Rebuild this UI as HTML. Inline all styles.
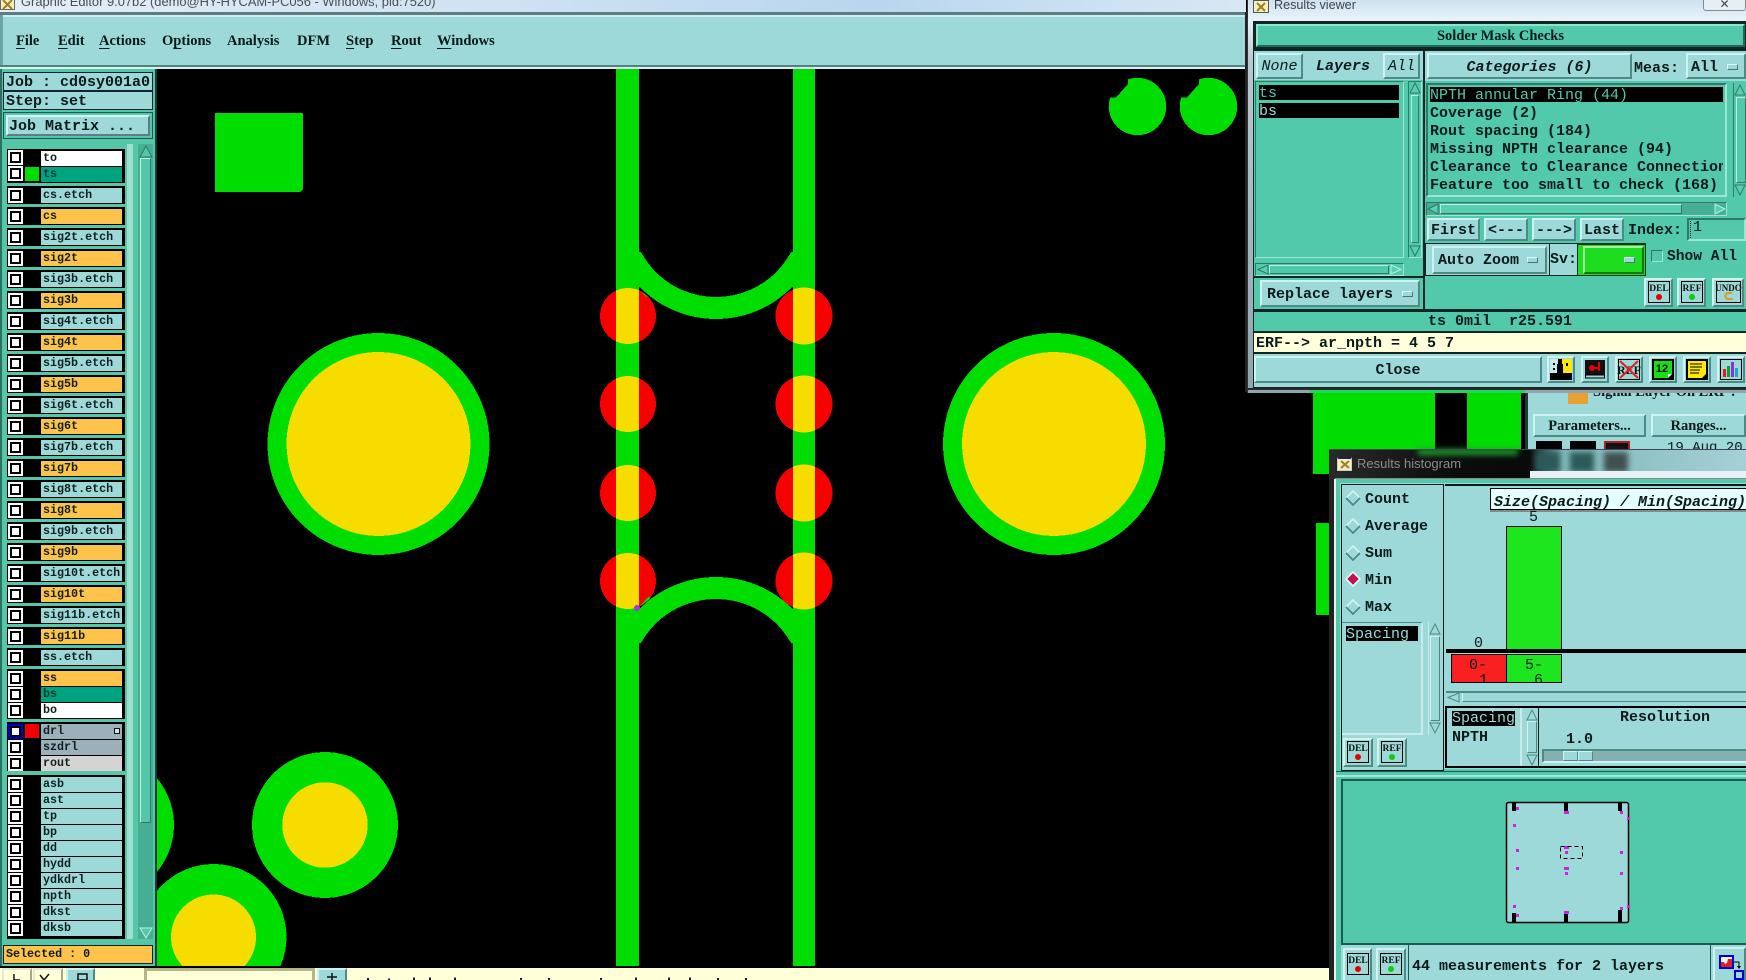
<!DOCTYPE html>
<html><head><meta charset="utf-8"><title>Graphic Editor</title>
<style>
html,body{margin:0;padding:0;background:#000;width:1746px;height:980px;overflow:hidden}
#p{position:relative;width:1746px;height:980px;overflow:hidden;background:#000;font:bold 15px/16px "Liberation Mono",monospace;color:#0c1a18}
#p div,#p span,#p svg.a,#p i,#p b{position:absolute;white-space:pre}
#p i,#p b{font-style:normal}
.b{box-sizing:border-box;background:#9dd9d9;border:2px solid;border-color:#cdf3f3 #4c8a86 #4c8a86 #cdf3f3}
.g{box-sizing:border-box;background:#52c9ab}
.c{left:8px;width:15px;height:15px;box-sizing:border-box;background:#fff;border:2px solid #fff}
.c:after{content:"";position:absolute;left:0;top:0;width:7px;height:7px;border:2px solid #000;background:#fff}
.l{left:41px;width:81px;height:14.5px;padding-left:2px;box-sizing:border-box;background:#9dd9d9;font:bold 11.7px/14px "Liberation Mono",monospace;color:#10201e}
.o{background:#fec34a}.w{background:#fff}.t{background:#00a37f;color:#02362c}.y{background:#9bb0b8}
.k{left:7px;width:117.5px;background:#000}
.s{font:bold 14.5px/16px "Liberation Serif",serif}
.m{font:bold 14.5px/16px "Liberation Serif",serif;top:33px;color:#0a1a1a}
.m u{text-underline-offset:3px}
.it{font-style:italic}
.dd{width:11px;height:6px;box-sizing:border-box;background:#9dd9d9;border:1px solid;border-color:#dff #477 #477 #dff}
.ic{box-sizing:border-box;background:#9dd9d9;border:2px solid;border-color:#cdf3f3 #4c8a86 #4c8a86 #cdf3f3}
.ic svg{position:absolute;left:0;top:0}
</style></head><body><div id="p">

<svg class="a" style="left:0;top:0" width="1746" height="980" shape-rendering="crispEdges">
<defs>
<clipPath id="cv"><rect x="157" y="69" width="1368" height="897"/></clipPath>
<clipPath id="t1"><rect x="617" y="252" width="197" height="90"/></clipPath>
<clipPath id="t2"><rect x="617" y="560" width="197" height="83"/></clipPath>
<clipPath id="tr"><rect x="616" y="0" width="23" height="980"/><rect x="793" y="0" width="22" height="980"/></clipPath>
</defs>
<g clip-path="url(#cv)">
<rect x="215" y="113" width="88" height="79" fill="#00dd00"/><path d="M303 192h-3l3-3z" fill="#000"/>
<rect x="616" y="69" width="23" height="897" fill="#00dd00"/>
<rect x="793" y="69" width="22" height="897" fill="#00dd00"/>
<circle cx="716" cy="212" r="96" fill="none" stroke="#00dd00" stroke-width="22" clip-path="url(#t1)"/>
<circle cx="716" cy="685" r="97" fill="none" stroke="#00dd00" stroke-width="22" clip-path="url(#t2)"/>
<g fill="#f80000"><circle cx="628" cy="316" r="28"/><circle cx="628" cy="404" r="28"/><circle cx="628" cy="493" r="28"/><circle cx="628" cy="581" r="28"/><circle cx="804" cy="316" r="28.5"/><circle cx="804" cy="404" r="28.5"/><circle cx="804" cy="493" r="28.5"/><circle cx="804" cy="581" r="28.5"/></g>
<g fill="#f7dc00" clip-path="url(#tr)"><circle cx="628" cy="316" r="28"/><circle cx="628" cy="404" r="28"/><circle cx="628" cy="493" r="28"/><circle cx="628" cy="581" r="28"/><circle cx="804" cy="316" r="28.5"/><circle cx="804" cy="404" r="28.5"/><circle cx="804" cy="493" r="28.5"/><circle cx="804" cy="581" r="28.5"/></g>
<path d="M639 290l8 6-1 1z" fill="#00dd00"/>
<path d="M640 606l9-10 1 3z" fill="#00dd00"/>
<circle cx="637" cy="608" r="3" fill="#b030e0"/>
<circle cx="378.500" cy="444" r="111" fill="#00dd00"/><circle cx="378.500" cy="444" r="92" fill="#f7dc00"/>
<circle cx="1054" cy="444" r="111" fill="#00dd00"/><circle cx="1054" cy="444" r="92" fill="#f7dc00"/>
<circle cx="325" cy="825" r="73" fill="#00dd00"/><circle cx="325" cy="825" r="42.700" fill="#f7dc00"/>
<circle cx="101" cy="825" r="73" fill="#00dd00"/>
<circle cx="213.500" cy="937" r="73" fill="#00dd00"/><circle cx="213.500" cy="937" r="42.500" fill="#f7dc00"/>
<circle cx="1137.500" cy="106.500" r="28.700" fill="#00dd00"/><circle cx="1208.500" cy="106.500" r="28.700" fill="#00dd00"/>
<path d="M1105 97l11 .5 12-13.500V75h-23z" fill="#000"/><path d="M1176 97l11 .5 12-13.500V75h-23z" fill="#000"/>
<rect x="1313" y="392" width="122" height="82" fill="#00dd00"/>
<rect x="1467" y="392" width="54" height="57" fill="#00dd00"/>
<rect x="1316" y="523" width="13" height="92" fill="#00dd00"/>
</g>
</svg>

<!-- title bar -->
<div style="left:0;top:0;width:1246px;height:12px;background:linear-gradient(90deg,#e4eef6,#cfe2f2 40%,#b9d6ee 70%,#d8e8f4)"></div>
<div style="left:0;top:12px;width:1246px;height:3px;background:#5d7d82"></div>
<div style="left:0;top:-6px;width:15px;height:16px;background:#f4f0c0;border:1px solid #666;box-sizing:border-box"></div>
<svg class="a" style="left:1px;top:0" width="14" height="10"><path d="M2 0l9 9M11 0L2 9" stroke="#a08020" stroke-width="2"/></svg>
<div style="left:21px;top:-6px;font:12.900px/16px 'Liberation Sans',sans-serif;color:#4a4f52">Graphic Editor 9.07b2 (demo@HY-HYCAM-PC056 - Windows, pid:7520)</div>

<!-- menu bar -->
<div style="left:0;top:15px;width:1245px;height:2px;background:#c9efef"></div>
<div style="left:0;top:17px;width:1245px;height:48px;background:#9dd9d9"></div>
<div style="left:0;top:15px;width:3px;height:50px;background:#6aa5a5"></div>
<div style="left:0;top:65px;width:1245px;height:2px;background:#54807f"></div>
<div style="left:0;top:67px;width:1245px;height:2px;background:#d8f2f2"></div>
<div class="m" style="left:16px"><u>F</u>ile</div>
<div class="m" style="left:58px"><u>E</u>dit</div>
<div class="m" style="left:99px"><u>A</u>ctions</div>
<div class="m" style="left:162px">O<u>p</u>tions</div>
<div class="m" style="left:227px">Analysis</div>
<div class="m" style="left:297px">DFM</div>
<div class="m" style="left:346px"><u>S</u>tep</div>
<div class="m" style="left:391px"><u>R</u>out</div>
<div class="m" style="left:437px"><u>W</u>indows</div>

<!-- left panel -->
<div class="g" style="left:0;top:69px;width:155px;height:897px;background:#55c6a8"></div>
<div style="left:0;top:69px;width:2px;height:897px;background:#2d6f60"></div>
<div style="left:155px;top:69px;width:2px;height:897px;background:#1a3c36"></div>
<div style="left:3px;top:72px;width:150px;height:19px;background:#9dd9d9;border:1px solid #123;box-sizing:border-box;padding:2px 0 0 2px">Job : cd0sy001a0</div>
<div style="left:3px;top:91px;width:150px;height:19px;background:#9dd9d9;border:1px solid #123;box-sizing:border-box;padding:2px 0 0 2px">Step: set</div>
<div style="left:3px;top:112px;width:150px;height:27px;background:#52c9ab;border:1px solid #1c5a50;box-sizing:border-box"></div>
<div class="b" style="left:6px;top:115px;width:144px;height:21px;padding:2px 0 0 1px;border-color:#d8f4f4 #678 #678 #d8f4f4">Job Matrix ...</div>

<div style="left:127px;top:144px;width:6px;height:795px;background:#9ddfd0"></div>
<div style="left:138px;top:144px;width:15px;height:795px;background:#45ae93"></div>
<div style="left:140px;top:158px;width:11px;height:665px;background:#55c6a8;border:1px solid;border-color:#bff0e0 #2d7a68 #2d7a68 #bff0e0;box-sizing:border-box"></div>
<svg class="a" style="left:139px;top:145px" width="14" height="13"><path d="M7 1l6 11H1z" fill="#55c6a8" stroke="#2d7a68"/></svg>
<svg class="a" style="left:139px;top:927px" width="14" height="12"><path d="M7 11L13 1H1z" fill="#55c6a8" stroke="#bff0e0"/></svg>

<div class="k" style="top:149px;height:34px"></div>
<div class="k" style="top:186px;height:18px"></div><div class="k" style="top:207px;height:18px"></div><div class="k" style="top:228px;height:18px"></div><div class="k" style="top:249px;height:18px"></div><div class="k" style="top:270px;height:18px"></div><div class="k" style="top:291px;height:18px"></div><div class="k" style="top:312px;height:18px"></div><div class="k" style="top:333px;height:18px"></div><div class="k" style="top:354px;height:18px"></div><div class="k" style="top:375px;height:18px"></div><div class="k" style="top:396px;height:18px"></div><div class="k" style="top:417px;height:18px"></div><div class="k" style="top:438px;height:18px"></div><div class="k" style="top:459px;height:18px"></div><div class="k" style="top:480px;height:18px"></div><div class="k" style="top:501px;height:18px"></div><div class="k" style="top:522px;height:18px"></div><div class="k" style="top:543px;height:18px"></div><div class="k" style="top:564px;height:18px"></div><div class="k" style="top:585px;height:18px"></div><div class="k" style="top:606px;height:18px"></div><div class="k" style="top:627px;height:18px"></div><div class="k" style="top:648px;height:18px"></div>
<div class="k" style="top:669px;height:50px"></div>
<div class="k" style="top:722px;height:49px"></div>
<div class="k" style="top:775px;height:164px"></div>

<i class="c" style="top:150px"></i><b class="l w" style="top:151px">to</b>
<i class="c" style="top:166px"></i><b style="left:25px;top:167px;width:14px;height:14px;background:#00dd00"></b><b class="l t" style="top:167px">ts</b>
<i class="c" style="top:188px"></i><b class="l" style="top:188px">cs.etch</b>
<i class="c" style="top:209px"></i><b class="l o" style="top:209px">cs</b>
<i class="c" style="top:230px"></i><b class="l" style="top:230px">sig2t.etch</b>
<i class="c" style="top:251px"></i><b class="l o" style="top:251px">sig2t</b>
<i class="c" style="top:272px"></i><b class="l" style="top:272px">sig3b.etch</b>
<i class="c" style="top:293px"></i><b class="l o" style="top:293px">sig3b</b>
<i class="c" style="top:314px"></i><b class="l" style="top:314px">sig4t.etch</b>
<i class="c" style="top:335px"></i><b class="l o" style="top:335px">sig4t</b>
<i class="c" style="top:356px"></i><b class="l" style="top:356px">sig5b.etch</b>
<i class="c" style="top:377px"></i><b class="l o" style="top:377px">sig5b</b>
<i class="c" style="top:398px"></i><b class="l" style="top:398px">sig6t.etch</b>
<i class="c" style="top:419px"></i><b class="l o" style="top:419px">sig6t</b>
<i class="c" style="top:440px"></i><b class="l" style="top:440px">sig7b.etch</b>
<i class="c" style="top:461px"></i><b class="l o" style="top:461px">sig7b</b>
<i class="c" style="top:482px"></i><b class="l" style="top:482px">sig8t.etch</b>
<i class="c" style="top:503px"></i><b class="l o" style="top:503px">sig8t</b>
<i class="c" style="top:524px"></i><b class="l" style="top:524px">sig9b.etch</b>
<i class="c" style="top:545px"></i><b class="l o" style="top:545px">sig9b</b>
<i class="c" style="top:566px"></i><b class="l" style="top:566px">sig10t.etch</b>
<i class="c" style="top:587px"></i><b class="l o" style="top:587px">sig10t</b>
<i class="c" style="top:608px"></i><b class="l" style="top:608px">sig11b.etch</b>
<i class="c" style="top:629px"></i><b class="l o" style="top:629px">sig11b</b>
<i class="c" style="top:650px"></i><b class="l" style="top:650px">ss.etch</b>
<i class="c" style="top:671px"></i><b class="l o" style="top:671px">ss</b>
<i class="c" style="top:687px"></i><b class="l t" style="top:687px">bs</b>
<i class="c" style="top:703px"></i><b class="l w" style="top:703px">bo</b>
<i class="c" style="top:724px;border-color:#0000c8;background:#0000c8"></i><b style="left:25px;top:724px;width:14px;height:14px;background:#f00000"></b><b class="l y" style="top:724px">drl</b>
<b style="left:114px;top:728px;width:6px;height:6px;border:1px solid #111;background:#d8e4e4;box-sizing:border-box"></b>
<i class="c" style="top:740px"></i><b class="l y" style="top:740px">szdrl</b>
<i class="c" style="top:756px"></i><b class="l" style="top:756px;background:#d4d4d4">rout</b>
<i class="c" style="top:777px"></i><b class="l" style="top:777px">asb</b>
<i class="c" style="top:793px"></i><b class="l" style="top:793px">ast</b>
<i class="c" style="top:809px"></i><b class="l" style="top:809px">tp</b>
<i class="c" style="top:825px"></i><b class="l" style="top:825px">bp</b>
<i class="c" style="top:841px"></i><b class="l" style="top:841px">dd</b>
<i class="c" style="top:857px"></i><b class="l" style="top:857px">hydd</b>
<i class="c" style="top:873px"></i><b class="l" style="top:873px">ydkdrl</b>
<i class="c" style="top:889px"></i><b class="l" style="top:889px">npth</b>
<i class="c" style="top:905px"></i><b class="l" style="top:905px">dkst</b>
<i class="c" style="top:921px"></i><b class="l" style="top:921px">dksb</b>
<div style="left:2px;top:939px;width:153px;height:27px;background:#55c6a8"></div>
<div style="left:3px;top:945px;width:150px;height:19px;background:#fec34a;border:1px solid #123;box-sizing:border-box;font:bold 11.700px/17px 'Liberation Mono',monospace;padding-left:2px">Selected : 0</div>

<!-- bottom bar -->
<div style="left:0;top:968px;width:1329px;height:12px;background:#ffffd8"></div>
<div class="b" style="left:2px;top:968px;width:30px;height:14px;background:#ffffd8;border-color:#e8e8d0 #a8a888 #a8a888 #e8e8d0"></div>
<div class="b" style="left:33px;top:968px;width:30px;height:14px;background:#ffffd8;border-color:#e8e8d0 #a8a888 #a8a888 #e8e8d0"></div>
<div class="b" style="left:66px;top:968px;width:29px;height:14px"></div>
<div style="left:144px;top:968px;width:171px;height:14px;box-sizing:border-box;background:#ffffd8;border:3px solid #b5b586;border-bottom:0"></div>
<div class="b" style="left:317px;top:968px;width:30px;height:14px"></div>
<svg class="a" style="left:0;top:968px" width="1329" height="12">
<path d="M14 6v6h6M40 7l4 5 5-6M78 6h9v6h-9zM332 5v7M327 9h10" fill="none" stroke="#111" stroke-width="1.500"/>
<g fill="#222"><rect x="367" y="10" width="2" height="2"/><rect x="388" y="10.500" width="2" height="1.500"/><rect x="413" y="9.500" width="2" height="2.500"/><rect x="429" y="9.500" width="2" height="2.500"/><rect x="454" y="9.500" width="2" height="2.500"/><rect x="520" y="10" width="2" height="2"/><rect x="548" y="10" width="2" height="2"/><rect x="600" y="10" width="2" height="2"/><rect x="635" y="9.500" width="2" height="2.500"/><rect x="668" y="9.500" width="2" height="2.500"/><rect x="689" y="9.500" width="2" height="2.500"/><rect x="717" y="10" width="2" height="2"/><rect x="745" y="10" width="2" height="2"/></g></svg>

<!-- right side window behind -->
<div style="left:1525px;top:392px;width:3px;height:60px;background:#1a3a36"></div>
<div style="left:1528px;top:392px;width:218px;height:60px;background:#9dd9d9"></div>
<div style="left:1568px;top:392px;width:20px;height:12px;background:#e8a030"></div>
<div class="s" style="left:1593px;top:385px;height:14px;overflow:hidden;line-height:14px;padding-top:0">Signal Layer On ERF :</div>
<div class="b" style="left:1533px;top:414px;width:113px;height:23px;text-align:center;padding-top:2px;font:bold 14.500px/16px 'Liberation Serif',serif">Parameters...</div>
<div class="b" style="left:1651px;top:414px;width:95px;height:23px;text-align:center;padding-top:2px;font:bold 14.500px/16px 'Liberation Serif',serif">Ranges...</div>
<div style="left:1536px;top:441px;width:26px;height:10px;background:#000"></div>
<div style="left:1570px;top:441px;width:26px;height:10px;background:#000"></div>
<div style="left:1604px;top:441px;width:26px;height:10px;background:#111;border:2px solid #a22;box-sizing:border-box"></div>
<div style="left:1667px;top:440px;height:10px;overflow:hidden;font:14px/16px 'Liberation Mono',monospace">19 Aug 20</div>

<!-- Results viewer window -->
<div style="left:1245px;top:12px;width:2px;height:380px;background:#222"></div>
<div style="left:1247px;top:0;width:499px;height:393px;background:linear-gradient(180deg,#cfe2f0 0,#e8f2f8 20px,#b8c8d0 60px,#8fa6ae 390px);border-left:1px solid #333;box-sizing:border-box"></div>
<div style="left:1253px;top:21px;width:493px;height:367px;background:#0f2622"></div>
<div style="left:1247px;top:388px;width:499px;height:2px;background:#2a2a2a"></div>
<div style="left:1310px;top:390px;width:215px;height:3px;background:#1fd65a"></div>
<div style="left:1253px;top:0;width:16px;height:13px;background:#f4f0c0;border:1px solid #555;box-sizing:border-box"></div>
<svg class="a" style="left:1255px;top:2px" width="12" height="10"><path d="M2 1l8 8M10 1L2 9" stroke="#a08020" stroke-width="2"/></svg>
<div style="left:1274px;top:-3px;font:12.600px/16px 'Liberation Sans',sans-serif;color:#3e4448">Results viewer</div>
<div style="left:1703px;top:-2px;width:43px;height:13px;box-sizing:border-box;border:1px solid #7f8a92;border-radius:0 0 3px 3px;background:#e8eff4;text-align:center;font:12px/11px 'Liberation Sans',sans-serif;color:#444">✕</div>

<div class="b" style="left:1256px;top:24px;width:489px;height:23px;background:#52c9ab;border-color:#8fe6d0 #1f6a5c #1f6a5c #8fe6d0;text-align:center;font:bold 14.500px/21px 'Liberation Serif',serif">Solder Mask Checks</div>

<!-- left column -->
<div style="left:1254px;top:51px;width:169px;height:29px;background:#9dd9d9"></div>
<div class="b it" style="left:1256px;top:53px;width:47px;height:26px;font-weight:normal;text-align:center;line-height:24px">None</div>
<div class="it" style="left:1305px;top:53px;width:76px;height:26px;text-align:center;line-height:28px;background:#9dd9d9">Layers</div>
<div class="b it" style="left:1383px;top:53px;width:37px;height:26px;font-weight:normal;text-align:center;line-height:24px">All</div>
<div class="g" style="left:1254px;top:80px;width:169px;height:196px"></div>
<div class="g" style="left:1255px;top:81px;width:149px;height:177px;border:1.500px solid;border-color:#2d7a68 #9de6d2 #9de6d2 #2d7a68"></div>
<div style="left:1259px;top:85px;width:140px;height:15px;background:#000;color:#52c9ab;font-weight:normal;line-height:17px">ts</div>
<div style="left:1259px;top:103px;width:140px;height:15px;background:#000;color:#9dd9d9;font-weight:normal;line-height:17px">bs</div>
<div style="left:1408px;top:81px;width:14px;height:177px;background:#52c9ab;border:1px solid;box-sizing:border-box;border-color:#2d7a68 #9de6d2 #9de6d2 #2d7a68"></div>
<div style="left:1411px;top:95px;width:8px;height:148px;background:#52c9ab;border:1px solid;box-sizing:border-box;border-color:#b8efe0 #2d7a68 #2d7a68 #b8efe0"></div>
<svg class="a" style="left:1409px;top:82px" width="12" height="12"><path d="M6 1l5 10H1z" fill="#58d0b0" stroke="#2d7a68"/></svg>
<svg class="a" style="left:1409px;top:245px" width="12" height="12"><path d="M6 11l5-10H1z" fill="#58d0b0" stroke="#2d7a68"/></svg>
<div style="left:1255px;top:263px;width:149px;height:13px;background:#52c9ab;border:1px solid;box-sizing:border-box;border-color:#2d7a68 #9de6d2 #9de6d2 #2d7a68"></div>
<div style="left:1269px;top:265px;width:120px;height:9px;background:#52c9ab;border:1px solid;box-sizing:border-box;border-color:#b8efe0 #2d7a68 #2d7a68 #b8efe0"></div>
<svg class="a" style="left:1257px;top:264px" width="12" height="11"><path d="M1 5.500L11 1v9z" fill="#58d0b0" stroke="#2d7a68"/></svg>
<svg class="a" style="left:1390px;top:264px" width="12" height="11"><path d="M11 5.500L1 1v9z" fill="#58d0b0" stroke="#b8efe0"/></svg>
<div class="g" style="left:1254px;top:278px;width:169px;height:31px"></div>
<div class="b" style="left:1260px;top:280px;width:160px;height:27px;padding:5px 0 0 5px">Replace layers</div>
<div class="dd" style="left:1402px;top:291px"></div>

<!-- right column -->
<div class="g" style="left:1425px;top:51px;width:321px;height:258px"></div>
<div style="left:1425px;top:51px;width:321px;height:30px;background:#9dd9d9"></div>
<div class="b it" style="left:1427px;top:53px;width:205px;height:26px;text-align:center;line-height:25px">Categories (6)</div>
<div style="left:1634px;top:61px">Meas:</div>
<div class="b" style="left:1686px;top:53px;width:60px;height:26px;padding:5px 0 0 3px">All</div>
<div class="dd" style="left:1727px;top:64px"></div>
<div class="g" style="left:1426px;top:83px;width:301px;height:114px;border:2px solid;border-color:#2d7a68 #9de6d2 #9de6d2 #2d7a68"></div>
<div style="left:1430px;top:87px;width:293px;height:15px;background:#000"></div>
<div style="left:1430px;top:88px;width:293px;height:18px;line-height:15px;color:#52c9ab;font-weight:normal">NPTH annular Ring (44)</div>
<div style="left:1430px;top:106px;width:293px;line-height:15px;overflow:hidden">Coverage (2)</div>
<div style="left:1430px;top:124px;width:293px;line-height:15px;overflow:hidden">Rout spacing (184)</div>
<div style="left:1430px;top:142px;width:293px;line-height:15px;overflow:hidden">Missing NPTH clearance (94)</div>
<div style="left:1430px;top:160px;width:293px;line-height:15px;overflow:hidden">Clearance to Clearance Connection</div>
<div style="left:1430px;top:178px;width:293px;line-height:15px;overflow:hidden">Feature too small to check (168)</div>
<div style="left:1733px;top:83px;width:13px;height:114px;background:#52c9ab;border-left:1px solid #2d7a68"></div>
<div style="left:1736px;top:97px;width:10px;height:86px;background:#52c9ab;border:1px solid;box-sizing:border-box;border-color:#b8efe0 #2d7a68 #2d7a68 #b8efe0"></div>
<svg class="a" style="left:1734px;top:84px" width="12" height="12"><path d="M6 1l5 10H1z" fill="#58d0b0" stroke="#2d7a68"/></svg>
<svg class="a" style="left:1734px;top:184px" width="12" height="12"><path d="M6 11l5-10H1z" fill="#58d0b0" stroke="#2d7a68"/></svg>
<div style="left:1426px;top:202px;width:301px;height:14px;background:#45ae93;box-sizing:border-box;border:1px solid;border-color:#2d7a68 #9de6d2 #9de6d2 #2d7a68"></div>
<div style="left:1440px;top:204px;width:242px;height:10px;background:#58d0b0;box-sizing:border-box;border:1px solid;border-color:#b8efe0 #2d7a68 #2d7a68 #b8efe0"></div>
<svg class="a" style="left:1427px;top:203px" width="12" height="12"><path d="M1 6L11 1v10z" fill="#58d0b0" stroke="#2d7a68"/></svg>
<svg class="a" style="left:1714px;top:203px" width="12" height="12"><path d="M11 6L1 1v10z" fill="#58d0b0" stroke="#b8efe0"/></svg>

<div class="b" style="left:1427px;top:218px;width:53px;height:23px;background:#9dd9d9;text-align:center;line-height:21px">First</div>
<div class="b" style="left:1484px;top:218px;width:44px;height:23px;background:#9dd9d9;text-align:center;line-height:21px">&lt;---</div>
<div class="b" style="left:1532px;top:218px;width:44px;height:23px;background:#9dd9d9;text-align:center;line-height:21px">---&gt;</div>
<div class="b" style="left:1580px;top:218px;width:44px;height:23px;background:#9dd9d9;text-align:center;line-height:21px">Last</div>
<div style="left:1628px;top:223px">Index:</div>
<div class="g" style="left:1687px;top:218px;width:59px;height:23px;border:2px solid;border-color:#2d7a68 #9de6d2 #9de6d2 #2d7a68;padding-left:4px;font-weight:normal;line-height:15px"><span style="left:1px;top:1px;height:17px;width:0;border-left:1px dotted #111"></span>1</div>

<div style="left:1425px;top:243px;width:221px;height:33px;background:#0f2622"></div>
<div style="left:1426px;top:244px;width:123px;height:31px;background:#9dd9d9"></div>
<div class="b" style="left:1432px;top:246px;width:115px;height:28px;padding:5px 0 0 4px">Auto Zoom</div>
<div class="dd" style="left:1527px;top:257px"></div>
<div style="left:1550px;top:244px;width:27px;height:31px;background:#9dd9d9;line-height:32px">Sv:</div>
<div style="left:1577px;top:244px;width:69px;height:32px;background:#1edc1e;border:1px solid #0f2622;box-sizing:border-box"></div>
<div class="b" style="left:1583px;top:246px;width:61px;height:28px;background:#1edc1e;border-color:#a0f0a0 #0e7a0e #0e7a0e #a0f0a0"></div>
<div class="dd" style="left:1624px;top:257px"></div>
<div style="left:1651px;top:250px;width:12px;height:12px;background:#52c9ab;border:1px solid;box-sizing:border-box;border-color:#2d7a68 #9de6d2 #9de6d2 #2d7a68"></div>
<div style="left:1667px;top:249px;font-size:14.600px">Show All</div>

<div class="ic" style="left:1644px;top:278px;width:29px;height:29px"><svg width="25" height="25"><rect x="2.500" y="1.500" width="21" height="21" fill="none" stroke="#000"/><text x="13" y="11" text-anchor="middle" font-family="Liberation Serif,serif" font-size="9.500" fill="#111">DEL</text><circle cx="13" cy="17" r="3" fill="#e80000"/></svg></div>
<div class="ic" style="left:1677px;top:278px;width:29px;height:29px"><svg width="25" height="25"><rect x="2.500" y="1.500" width="21" height="21" fill="none" stroke="#000"/><text x="13" y="11" text-anchor="middle" font-family="Liberation Serif,serif" font-size="9.500" fill="#111">REF</text><circle cx="13" cy="17" r="3" fill="#14c814"/></svg></div>
<div class="ic" style="left:1712px;top:278px;width:32px;height:29px"><svg width="28" height="25"><rect x="2.500" y="1.500" width="24" height="21" fill="none" stroke="#000"/><text x="14.500" y="11" text-anchor="middle" font-family="Liberation Serif,serif" font-size="9" fill="#111">UNDO</text><path d="M18 13h-5l-2 3 2 3h6" fill="none" stroke="#d8a020" stroke-width="2"/></svg></div>

<div class="g" style="left:1254px;top:312px;width:492px;height:19px;padding:2px 0 0 174px">ts 0mil  r25.591</div>
<div style="left:1254px;top:333px;width:492px;height:19px;background:#ffffdc;padding:3px 0 0 2px;box-sizing:border-box">ERF--&gt; ar_npth = 4 5 7</div>
<div style="left:1254px;top:354px;width:492px;height:33px;background:#9dd9d9"></div>
<div class="b" style="left:1254px;top:356px;width:288px;height:27px;text-align:center;line-height:25px">Close</div>

<div class="ic" style="left:1547px;top:356px;width:28px;height:27px"><svg width="24" height="23"><rect x="1" y="1" width="22" height="21" fill="#c8ecec"/><rect x="13" y="1" width="10" height="15" fill="#ffe800"/><path d="M1 22V15h7V6h1V1h4v5h1v9h9v7z" fill="#000"/><rect x="4" y="5" width="2" height="2" fill="#000"/><rect x="4" y="10" width="2" height="2" fill="#000"/><rect x="17" y="5" width="2" height="3" fill="#000"/></svg></div>
<div class="ic" style="left:1581px;top:356px;width:28px;height:27px"><svg width="24" height="23"><rect x="2" y="2" width="20" height="15" fill="#111"/><rect x="2.500" y="17" width="19" height="3" fill="#9dd9d9" stroke="#000"/><circle cx="9" cy="10" r="3" fill="#e80000"/><rect x="12" y="9" width="4" height="2" fill="#e80000"/><rect x="15" y="4" width="2" height="9" fill="#e80000"/></svg></div>
<div class="ic" style="left:1615px;top:356px;width:28px;height:27px"><svg width="24" height="23"><rect x="1.500" y="1.500" width="21" height="20" fill="none" stroke="#000"/><text x="12" y="16" text-anchor="middle" font-family="Liberation Serif,serif" font-size="12" fill="#111">REF</text><path d="M3 3l18 17M21 3L3 20" stroke="#e02020" stroke-width="2"/></svg></div>
<div class="ic" style="left:1649px;top:356px;width:28px;height:27px"><svg width="24" height="23"><rect x="1" y="1" width="22" height="21" fill="#000"/><path d="M3 3h18v13l-4 4H3z" fill="#14e014"/><path d="M17 20l4-4h-4z" fill="#d8f4f4"/><text x="11" y="14" text-anchor="middle" font-family="Liberation Sans,sans-serif" font-weight="bold" font-size="11" fill="#000">12</text></svg></div>
<div class="ic" style="left:1683px;top:356px;width:28px;height:27px"><svg width="24" height="23"><rect x="1" y="1" width="22" height="21" fill="#000"/><path d="M3 3h18v13l-4 4H3z" fill="#ffe800"/><path d="M5 6h12M5 9h12M5 12h10M5 15h9" stroke="#000"/></svg></div>
<div class="ic" style="left:1717px;top:356px;width:28px;height:27px"><svg width="24" height="23"><rect x="1.500" y="1.500" width="21" height="20" fill="none" stroke="#000"/><rect x="4" y="11" width="3" height="8" fill="#e02020"/><rect x="8" y="8" width="3" height="11" fill="#10a030"/><rect x="12" y="4" width="3" height="15" fill="#9030d0"/><rect x="16" y="10" width="3" height="9" fill="#18a8c8"/></svg></div>

<!-- Results histogram window -->
<div style="left:1329px;top:449px;width:417px;height:531px;background:#111"></div>
<div style="left:1329px;top:449px;width:417px;height:30px;background:linear-gradient(90deg,#2a2a2a 0,#0c0c0c 30%,#0a0a0a 45%,#0a0a0a 48%,#7eb8b8 56%,#a6d0d8 100%)"></div>
<div style="left:1418px;top:449px;width:100px;height:6px;background:#1fa030;filter:blur(3px)"></div>
<div style="left:1536px;top:452px;width:24px;height:20px;background:#2c5a5a;filter:blur(3px)"></div>
<div style="left:1570px;top:452px;width:24px;height:20px;background:#2c5a5a;filter:blur(3px)"></div>
<div style="left:1604px;top:452px;width:24px;height:20px;background:#40504f;filter:blur(3px)"></div>
<div style="left:1530px;top:471px;width:216px;height:7px;background:#e6f2f4"></div>
<div style="left:1329px;top:449px;width:417px;height:1px;background:#445"></div>
<div style="left:1337px;top:457px;width:15px;height:14px;background:#f4f0c0;border:1px solid #ccc;box-sizing:border-box;border-top:2px solid #224"></div>
<svg class="a" style="left:1339px;top:459px" width="12" height="11"><path d="M2 2l8 7M10 2L2 9" stroke="#a08020" stroke-width="2"/></svg>
<div style="left:1357px;top:456px;font:13px/16px 'Liberation Sans',sans-serif;color:#8c8c8c">Results histogram</div>

<div style="left:1335px;top:478px;width:411px;height:1px;background:#888"></div>
<div style="left:1336px;top:479px;width:410px;height:501px;background:#52c9ab"></div>
<div style="left:1329px;top:479px;width:5px;height:501px;background:#222"></div>
<div style="left:1334px;top:479px;width:2px;height:501px;background:#e8f0f0"></div>
<div style="left:1340px;top:483px;width:406px;height:286px;background:#9dd9d9"></div>

<div style="left:1341px;top:484px;width:103px;height:287px;box-sizing:border-box;border:1.500px solid #0c1a18;background:#9dd9d9"></div>
<svg class="a" style="left:1345px;top:490px" width="18" height="126" shape-rendering="crispEdges">
<g stroke-width="2" fill="#9dd9d9"><path d="M8 1l7 7-7 7-7-7z" stroke="#cdf3f3"/><path d="M1 8l7 7 7-7" stroke="#4c8a86" fill="none"/>
<path d="M8 29l7 7-7 7-7-7z" stroke="#cdf3f3"/><path d="M1 36l7 7 7-7" stroke="#4c8a86" fill="none"/>
<path d="M8 56l7 7-7 7-7-7z" stroke="#cdf3f3"/><path d="M1 63l7 7 7-7" stroke="#4c8a86" fill="none"/>
<path d="M8 82l7 7-7 7-7-7z" stroke="#d8f8f8" fill="#c8104c"/>
<path d="M8 110l7 7-7 7-7-7z" stroke="#cdf3f3"/><path d="M1 117l7 7 7-7" stroke="#4c8a86" fill="none"/></g></svg>
<div style="left:1365px;top:492px">Count</div>
<div style="left:1365px;top:519px">Average</div>
<div style="left:1365px;top:546px">Sum</div>
<div style="left:1365px;top:573px">Min</div>
<div style="left:1365px;top:600px">Max</div>
<div style="left:1342px;top:622px;width:81px;height:113px;background:#9dd9d9;border-right:2px solid #c8ecec;border-bottom:2px solid #c8ecec;border-top:1px solid #4c8a86;box-sizing:border-box"></div>
<div style="left:1346px;top:626px;width:72px;height:15px;background:#000;color:#9dd9d9;font-weight:normal;line-height:17px">Spacing</div>
<div style="left:1428px;top:622px;width:14px;height:113px;background:#9dd9d9;border-left:1px solid #c8ecec;box-sizing:border-box"></div>
<div style="left:1430px;top:636px;width:10px;height:85px;background:#9dd9d9;box-sizing:border-box;border:1px solid;border-color:#cdf3f3 #4c8a86 #4c8a86 #cdf3f3"></div>
<svg class="a" style="left:1429px;top:623px" width="12" height="12"><path d="M6 1l5 10H1z" fill="#9dd9d9" stroke="#4c8a86"/></svg>
<svg class="a" style="left:1429px;top:722px" width="12" height="12"><path d="M6 11l5-10H1z" fill="#9dd9d9" stroke="#4c8a86"/></svg>
<div class="ic" style="left:1343px;top:738px;width:30px;height:29px"><svg width="26" height="25"><rect x="2.500" y="1.500" width="21" height="21" fill="none" stroke="#000"/><text x="13" y="11" text-anchor="middle" font-family="Liberation Serif,serif" font-size="9.500" fill="#111">DEL</text><circle cx="13" cy="17" r="3" fill="#e80000"/></svg></div>
<div class="ic" style="left:1377px;top:738px;width:30px;height:29px"><svg width="26" height="25"><rect x="2.500" y="1.500" width="21" height="21" fill="none" stroke="#000"/><text x="13" y="11" text-anchor="middle" font-family="Liberation Serif,serif" font-size="9.500" fill="#111">REF</text><circle cx="13" cy="17" r="3" fill="#14c814"/></svg></div>

<div style="left:1445px;top:484px;width:301px;height:1.500px;background:#0c1a18"></div>
<div style="left:1490px;top:488px;width:256px;height:22px;background:#e4ffff;border:1px solid #000;border-right:0;box-sizing:border-box"></div>
<div style="left:1490px;top:510px;width:256px;height:2px;background:#808c8c"></div>
<div class="it" style="left:1494px;top:495px">Size(Spacing) / Min(Spacing)</div>
<div style="left:1529px;top:510px;font-weight:normal">5</div>
<div style="left:1474px;top:636px;font-weight:normal">0</div>
<div style="left:1506px;top:526px;width:56px;height:124px;background:#1ee61e;border:1px solid #000;box-sizing:border-box"></div>
<div style="left:1446px;top:649px;width:300px;height:4px;background:#000"></div>
<div style="left:1451px;top:654px;width:56px;height:29px;background:#f82020;border:1px solid #000;box-sizing:border-box;overflow:hidden;font-weight:normal"><span style="left:17px;top:3px">0-</span><span style="left:27px;top:18px">1</span></div>
<div style="left:1506px;top:654px;width:56px;height:29px;background:#1ee61e;border:1px solid #000;box-sizing:border-box;overflow:hidden;font-weight:normal"><span style="left:18px;top:3px">5-</span><span style="left:27px;top:18px">6</span></div>
<div style="left:1446px;top:691px;width:300px;height:12px;background:#9dd9d9;border-top:2px solid #4c8a86;box-sizing:border-box"></div>
<svg class="a" style="left:1447px;top:692px" width="13" height="11"><path d="M1 5.500L12 1v9z" fill="#9dd9d9" stroke="#4c8a86"/></svg>
<div style="left:1462px;top:693px;width:284px;height:9px;background:#9dd9d9;border-bottom:1px solid #4c8a86;border-left:1px solid #cdf3f3;box-sizing:border-box"></div>
<div style="left:1445px;top:706px;width:301px;height:2px;background:#000"></div>
<div style="left:1445px;top:706px;width:2px;height:62px;background:#000"></div>
<div style="left:1452px;top:711px;width:63px;height:15px;background:#000;color:#9dd9d9;overflow:hidden;font-weight:normal;line-height:16px">Spacing</div>
<div style="left:1452px;top:730px">NPTH</div>
<div style="left:1520px;top:708px;width:2px;height:58px;background:#c8ecec"></div>
<div style="left:1525px;top:708px;width:14px;height:58px;background:#9dd9d9;border-right:1px solid #0c1a18;box-sizing:border-box"></div>
<div style="left:1527px;top:721px;width:10px;height:32px;background:#9dd9d9;box-sizing:border-box;border:1px solid;border-color:#cdf3f3 #4c8a86 #4c8a86 #cdf3f3"></div>
<svg class="a" style="left:1526px;top:709px" width="12" height="12"><path d="M6 1l5 10H1z" fill="#9dd9d9" stroke="#4c8a86"/></svg>
<svg class="a" style="left:1526px;top:754px" width="12" height="12"><path d="M6 11l5-10H1z" fill="#9dd9d9" stroke="#4c8a86"/></svg>
<div style="left:1620px;top:710px">Resolution</div>
<div style="left:1566px;top:732px">1.0</div>
<div style="left:1542px;top:749px;width:204px;height:14px;background:#85b0b0;box-sizing:border-box;border-top:2px solid #4c8a86;border-bottom:2px solid #cdf3f3;border-left:2px solid #4c8a86"></div>
<div style="left:1563px;top:751px;width:15px;height:10px;background:#9dd9d9;box-sizing:border-box;border:1px solid;border-color:#cdf3f3 #4c8a86 #4c8a86 #cdf3f3"></div>
<div style="left:1578px;top:751px;width:15px;height:10px;background:#9dd9d9;box-sizing:border-box;border:1px solid;border-color:#cdf3f3 #4c8a86 #4c8a86 #cdf3f3"></div>
<div style="left:1445px;top:766px;width:301px;height:2px;background:#000"></div>
<div style="left:1336px;top:771px;width:410px;height:1px;background:#1c5a50"></div>
<div style="left:1336px;top:775px;width:410px;height:2px;background:#a8e8dc"></div>

<!-- map -->
<div style="left:1341px;top:779px;width:405px;height:2px;background:#1c5a50"></div>
<div style="left:1341px;top:781px;width:2px;height:162px;background:#1c5a50"></div>
<svg class="a" style="left:1500px;top:796px" width="136" height="132">
<rect x="6.500" y="6.500" width="122" height="120" rx="2" fill="#9dd9d9" stroke="#000" stroke-width="1.500"/>
<g fill="#000"><rect x="12" y="7" width="4" height="8"/><rect x="64" y="7" width="4" height="8"/><rect x="118" y="7" width="4" height="8"/><rect x="12" y="117" width="4" height="9"/><rect x="64" y="115" width="4" height="11"/><rect x="118" y="114" width="4" height="12"/></g>
<g fill="#d020e0"><rect x="16" y="11" width="3" height="3"/><rect x="64" y="15" width="5" height="3"/><rect x="120" y="15" width="3" height="3"/><rect x="127" y="21" width="3" height="3"/><rect x="13" y="28" width="3" height="3"/><rect x="16" y="53" width="3" height="3"/><rect x="120" y="55" width="3" height="3"/><rect x="64" y="50" width="5" height="3"/><rect x="65" y="55" width="3" height="3"/><rect x="16" y="71" width="3" height="3"/><rect x="64" y="71" width="5" height="3"/><rect x="65" y="76" width="3" height="3"/><rect x="120" y="76" width="3" height="3"/><rect x="13" y="109" width="3" height="3"/><rect x="127" y="109" width="3" height="3"/><rect x="120" y="111" width="3" height="3"/><rect x="16" y="118" width="3" height="3"/><rect x="64" y="115" width="5" height="3"/></g>
<rect x="60.500" y="50.500" width="22" height="12" fill="none" stroke="#000" stroke-dasharray="4 3"/>
</svg>

<!-- bottom row -->
<div style="left:1341px;top:943px;width:405px;height:2px;background:#1c5a50"></div>
<div style="left:1341px;top:945px;width:405px;height:35px;background:#9dd9d9"></div>
<div class="ic" style="left:1343px;top:948px;width:29px;height:34px"><svg width="25" height="30"><rect x="2.500" y="3.500" width="21" height="21" fill="none" stroke="#000"/><text x="13" y="13" text-anchor="middle" font-family="Liberation Serif,serif" font-size="9.500" fill="#111">DEL</text><circle cx="13" cy="19" r="3" fill="#e80000"/></svg></div>
<div class="ic" style="left:1376px;top:948px;width:30px;height:34px"><svg width="26" height="30"><rect x="2.500" y="3.500" width="21" height="21" fill="none" stroke="#000"/><text x="13" y="13" text-anchor="middle" font-family="Liberation Serif,serif" font-size="9.500" fill="#111">REF</text><circle cx="13" cy="19" r="3" fill="#14c814"/></svg></div>
<div style="left:1408px;top:945px;width:303px;height:35px;background:#9dd9d9;border-left:1px solid #1c5a50;border-right:1px solid #1c5a50;box-sizing:border-box;padding:14px 0 0 3px">44 measurements for 2 layers</div>
<div class="ic" style="left:1713px;top:947px;width:33px;height:35px"><svg width="31" height="31"><rect x="5" y="7" width="13" height="12" fill="#e8f4f4" stroke="#0000d0" stroke-width="2"/><path d="M6 18v-5h3l1 2 2-1 1-4h4v8z" fill="#e02020"/><path d="M19 13h5v5" fill="none" stroke="#000"/><path d="M22 17h4l-2 3z" fill="#000"/><rect x="20" y="22" width="8" height="8" fill="none" stroke="#0000d0" stroke-width="2"/></svg></div>

</div></body></html>
